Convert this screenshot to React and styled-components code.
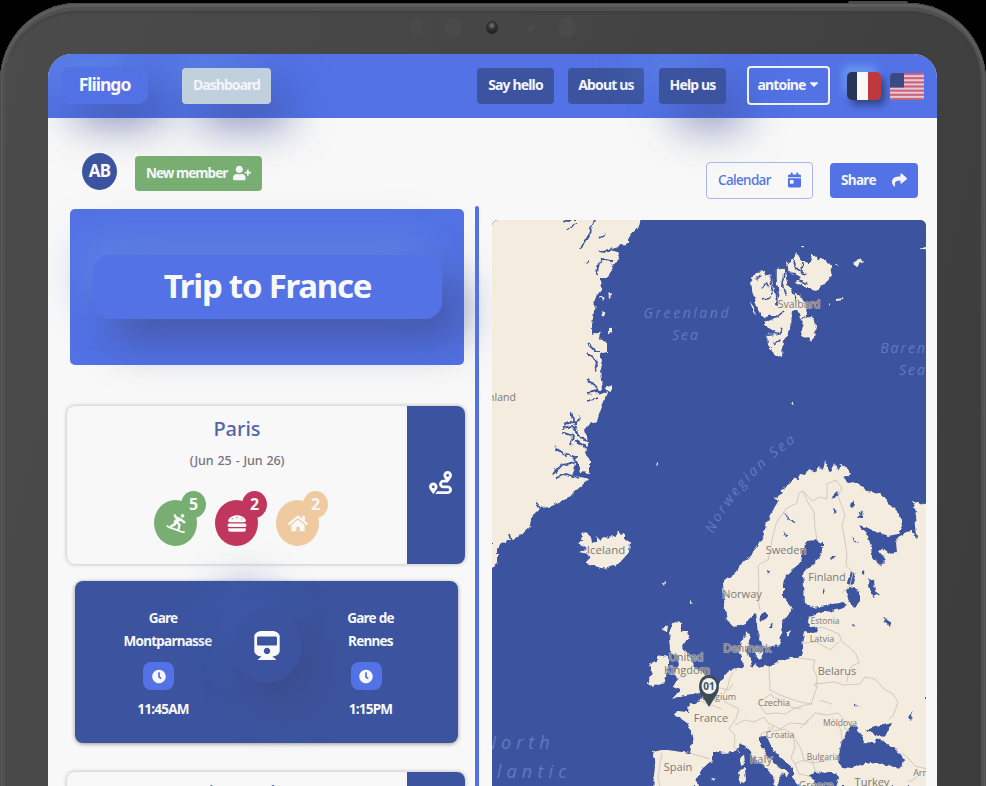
import React from "react";
import styled, { createGlobalStyle } from "styled-components";
import {
  FaUserPlus, FaCalendarDay, FaShare, FaRoute, FaSnowboarding,
  FaHamburger, FaHome, FaClock, FaTrain, FaCaretDown,
} from "react-icons/fa";

const c = {
  blue: "#5272e5", navy: "#3c549f", paper: "#f8f8f8",
  green: "#78ae71", red: "#c1365d", sand: "#efc9a0", land: "#f3ecdf",
};

const Global = createGlobalStyle`
  * { box-sizing: border-box; }
  html, body { margin: 0; background: #000; overflow: hidden; }
  body { font-family: "Noto Sans", "Open Sans", sans-serif; color: ${c.paper}; }
`;

const Device = styled.div`
  position: relative;
  width: 986px;
  height: 786px;
  overflow: hidden;
  background: #000;
`;
const PowerKey = styled.div`
  position: absolute;
  left: 848px;
  top: 1px;
  width: 60px;
  height: 4px;
  border-radius: 3px;
  background: #4b4b4b;
`;
const Bezel = styled.div`
  position: absolute;
  inset: 3px 0 -80px 0;
  padding: 51px 49px 0 48px;
  border-radius: 78px 78px 0 0;
  background: linear-gradient(105deg, #4b4b4b 0%, #454545 45%, #3c3c3c 100%);
  box-shadow: inset 0 0 0 1px #4b4b4b, inset 0 2px 1px 2px #5e5e5e, inset 0 0 0 5px #505050,
    inset 0 7px 0 1px #505050, inset 0 10px 3px -1px #3c3c3c;
`;
const Sensor = styled.i`
  position: absolute;
  left: ${p => p.$x}px;
  top: ${p => p.$y}px;
  width: ${p => p.$w}px;
  height: ${p => p.$h}px;
  border-radius: 50%;
  background: ${p => p.$lens ? "radial-gradient(circle at 48% 35%, #67676c 0 10%, #313136 35%, #1f1f23 75%)" : "#4a4a4a"};
`;
const Screen = styled.div`
  height: 760px;
  overflow: hidden;
  border-radius: 24px 24px 0 0;
  background: ${c.paper};
`;

const Header = styled.header`
  display: flex;
  align-items: center;
  height: 64px;
  padding: 0 13px;
  background: ${c.blue};
`;
const Logo = styled.div`
  width: 87px;
  height: 37px;
  margin-bottom: 1px;
  border-radius: 9px;
  background: ${c.blue};
  box-shadow: 15px 20px 40px rgba(60, 76, 150, .62), -12px -14px 36px rgba(112, 155, 245, .5);
  font: 700 17.5px/35px "Noto Sans", sans-serif;
  letter-spacing: -1px;
  text-align: center;
`;
const NavButton = styled.button`
  width: ${p => p.$w}px;
  height: 36px;
  margin: 0 0 1px ${p => p.$gap}px;
  padding: 0 0 2px;
  border: ${p => p.$outline ? "2px solid #eef0fa" : "0"};
  ${p => p.$outline && "height: 39px;"}
  border-radius: 4px;
  background: ${p => p.$pale ? "#c0d0dd" : p.$outline ? "transparent" : c.navy};
  box-shadow: ${p => p.$glow ? "18px 22px 42px rgba(60, 76, 150, .62), -18px -18px 40px rgba(112, 155, 235, .38)" : "none"};
  color: #f4f5fa;
  font: 700 14px "Noto Sans", sans-serif;
  letter-spacing: ${p => p.$pale ? -.95 : -.85}px;
  white-space: nowrap;
  svg { width: 12px; height: 14px; margin-left: 2px; vertical-align: -1px; }
`;
const FlagFr = styled.span`
  width: 34px;
  height: 28px;
  margin: 0 9px 0 17px;
  border-radius: 5px;
  background: linear-gradient(90deg, #273559 0 28%, #f8f8f8 28% 63%, #bd393c 63%);
  box-shadow: 4px 5px 7px rgba(35, 45, 90, .65), -4px -6px 9px rgba(115, 165, 250, .75);
`;
const FlagUs = styled.svg`
  width: 34px;
  height: 27px;
  border-radius: 3px;
`;

const Toolbar = styled.div`
  display: flex;
  height: 88px;
  padding: 35px 19px 0 34px;
`;
const Avatar = styled.div`
  width: 35px;
  height: 37px;
  border-radius: 50%;
  background: ${c.navy};
  font-weight: 700;
  font-size: 17px;
  line-height: 36px;
  letter-spacing: -.8px;
  text-align: center;
`;
const Action = styled.button`
  display: flex;
  align-items: center;
  justify-content: space-between;
  width: ${p => p.$w}px;
  height: ${p => p.$outline ? 37 : 35}px;
  margin: ${p => p.$m};
  padding: 0 11px 2px;
  border: ${p => p.$outline ? "1px solid #a8b7f0" : "0"};
  border-radius: 4px;
  background: ${p => p.$bg};
  color: ${p => p.$outline ? c.blue : "#f5f6fa"};
  font: ${p => p.$outline ? 500 : 700} 13.5px "Noto Sans", sans-serif;
  letter-spacing: ${p => p.$tight ? -.95 : -.65}px;
  white-space: nowrap;
  svg { flex: none; width: ${p => p.$icon}px; height: 16px; }
`;

const Columns = styled.main`
  display: grid;
  grid-template-columns: 427px 4px 434px;
  height: 600px;
`;
const Journey = styled.section`
  padding: 3px 0 0 19px;
`;
const Hero = styled.div`
  width: 394px;
  height: 156px;
  margin-left: 3px;
  padding: 46px 22px 0 23px;
  border-radius: 5px;
  background: ${c.blue};
`;
const Title = styled.h1`
  height: 64px;
  margin: 0;
  border-radius: 17px;
  background: ${c.blue};
  box-shadow: 20px 22px 42px rgba(63, 77, 145, .68), -10px -16px 42px rgba(112, 150, 232, .5);
  font-size: 33px;
  font-weight: 700;
  line-height: 62px;
  letter-spacing: -1.25px;
  text-align: center;
`;
const CityCard = styled.article`
  display: flex;
  justify-content: flex-end;
  width: 398px;
  height: 158px;
  margin-top: ${p => p.$top}px;
  overflow: hidden;
  border-radius: 8px;
  background: ${c.paper};
  box-shadow: 0 0 4px rgba(0, 0, 0, .28);
`;
const CityBody = styled.div`
  flex: 1;
  text-align: center;
`;
const CityName = styled.h2`
  margin: ${p => p.$lift ? 5 : 7}px 0 0;
  color: #5165aa;
  font-size: 20px;
  font-weight: 500;
  line-height: 32px;
`;
const Dates = styled.p`
  margin: 5px 0 0;
  color: #74747e;
  font-size: 12.5px;
  font-weight: 500;
  line-height: 22px;
  letter-spacing: -.15px;
  word-spacing: 1px;
`;
const Side = styled.div`
  display: flex;
  align-items: center;
  justify-content: center;
  width: 58px;
  padding: 0 0 6px 9px;
  background: ${c.navy};
  svg { width: 23px; height: 25px; }
`;
const Stats = styled.div`
  display: flex;
  gap: 18px;
  margin: 28px 0 0 87px;
`;
const Stat = styled.div`
  position: relative;
  display: flex;
  align-items: center;
  justify-content: center;
  width: 43px;
  height: 46px;
  border-radius: 50%;
  background: ${p => p.$bg};
  svg { width: 20px; height: 19px; }
`;
const Count = styled.b`
  position: absolute;
  left: 27px;
  top: -9px;
  width: 25px;
  height: 27px;
  border-radius: 50%;
  background: inherit;
  font-size: 16px;
  line-height: 27px;
`;
const Transport = styled.article`
  display: grid;
  grid-template-columns: 184px 16px 183px;
  width: 383px;
  height: 162px;
  margin: 17px 0 0 8px;
  border-radius: 8px;
  background: ${c.navy};
  box-shadow: 0 1px 4px rgba(0, 0, 0, .4);
`;
const Stop = styled.div`
  display: flex;
  flex-direction: column;
  align-items: center;
  padding-top: 26px;
  padding-left: ${p => p.$end ? 8 : 0}px;
  padding-right: ${p => p.$end ? 0 : 8}px;
  font-size: 13.5px;
  font-weight: 700;
  line-height: 23px;
  letter-spacing: -.75px;
  text-align: center;
`;
const StationLine = styled.span`
  padding-left: ${p => p.$inset || 0}px;
`;
const Clock = styled.span`
  display: grid;
  place-items: center;
  width: 31px;
  height: 28px;
  margin: 9px 9px 8px 0;
  border-radius: 8px;
  background: ${c.blue};
  svg { width: 14px; height: 15px; }
`;
const TrainDisc = styled.div`
  display: grid;
  place-items: center;
  justify-self: center;
  width: 70px;
  height: 75px;
  margin: 27px 0 0;
  border-radius: 50%;
  background: ${c.navy};
  box-shadow: 16px 22px 42px rgba(58, 72, 125, .6), -22px -26px 42px rgba(65, 97, 182, .42);
  svg { width: 26px; height: 29px; }
`;
const Divider = styled.div`
  border-radius: 2px;
  background: ${c.blue};
`;
const MapFrame = styled.section`
  height: 580px;
  margin: 14px 0 0 13px;
  overflow: hidden;
  width: 434px;
  border-radius: 6px 6px 0 0;
  background: ${c.navy};
`;
const MapSvg = styled.svg`
  display: block;
  font-family: "Open Sans", sans-serif;
`;

const stripes = [0, 2, 4, 6, 8, 10, 12];

function UsFlag() {
  return (
    <FlagUs viewBox="0 0 34 27" preserveAspectRatio="none">
      <rect width="34" height="27" fill="#e4c9d6" />
      {stripes.map(i => <rect key={i} y={i * 2.077} width="34" height="2.077" fill="#cc6179" />)}
      <rect width="14" height="14.5" fill="#394a84" />
    </FlagUs>
  );
}

const countries = [
  ["Iceland", 606, 554, 11.5], ["Svalbard", 799, 308, 10.5], ["Sweden", 786, 554, 11], ["Finland", 827, 581, 11],
  ["Norway", 742, 598, 11], ["Estonia", 825, 624, 8.5], ["Latvia", 822, 642, 9], ["Denmark", 747, 652, 11],
  ["United", 686, 661, 11], ["Kingdom", 687, 674, 11], ["Belarus", 837, 675, 11], ["Belgium", 719, 700, 9],
  ["Czechia", 774, 706, 9], ["France", 711, 722, 11], ["Moldova", 840, 726, 8.5], ["Croatia", 780, 738, 8.5],
  ["Italy", 761, 763, 11.5], ["Bulgaria", 823, 760, 8.5], ["Spain", 678, 771, 11], ["Turkey", 872, 786, 11],
  ["Greece", 816, 789, 10.5], ["Arm", 922, 776, 9],
];

const eurasia = `M725 610L724 598 723 583 733 575 739 566 747 559 757 548 763 537 766 525 771 513
  779 500 773 499 783 493 780 490 790 483 793 478 797 480 800 474 806 475 809 469 815 472 819 466 823 470 825 462
  829 471 832 472 835 463 837 471 840 464 848 468 851 474 843 478 848 483 854 482 862 487 868 491 882 495 890 505
  900 515 902 527 898 534 888 536 876 532 866 527 858 525 867 534 871 546 872 557 881 564 885 560 878 551
  882 548 889 554 896 553 895 543 905 532 911 531 917 538 916 525 915 516 917 510 912 501 927 505
  927 787 835 787 838 777 833 772 824 774 815 771 810 775 815 787 801 787 793 777 793 768 787 763
  773 750 767 737 760 736 760 745 768 757 777 765 788 773 787 778 782 773 780 780 778 787 775 787 773 777
  767 767 753 758 748 748 742 744 733 752 723 753 713 751 713 760 702 770 698 777 697 787 653 787
  655 767 653 752 660 749 690 753 693 737 687 722 675 715 677 711 688 712 689 703 697 705 702 698
  710 692 717 685 722 678 730 670 743 668 742 660 740 653 742 640 748 632 750 638 746 653 751 661 752 668
  755 664 760 667 765 665 770 667 777 663 790 658 797 658 802 652 803 638 806 631 812 633 817 632 818 626
  813 627 807 623 810 617 820 613 837 610 847 605 843 602 827 605 813 607 805 603 804 585 803 577 806 569
  815 563 823 551 823 543 816 540 807 541 805 545 800 562 787 575 783 583 783 597 792 607 790 613
  782 623 780 645 767 647 762 645 758 633 755 613 745 623 735 627 727 620Z`;

const greenland = `M491 219H641L639 226 632 235 628 238 628 243 621 245 612 250 620 253 617 262 611 265 612 271
  609 277 602 277 601 290 595 298 594 311 592 325 592 335 600 331 599 340 607 342 607 352 600 354 602 360
  600 370 602 389 598 395 607 392 603 404 600 412 597 421 591 424 586 428 588 445 586 452 590 462 590 473
  580 472 577 461 572 475 588 479 579 489 568 498 550 507 540 508 533 515 529 528 522 534 514 539 502 542
  497 549 497 562 491 570Z`;

const svalbard = `M751 279L756 272 766 271 765 277 770 274 773 285 776 296 775 305 778 306 777 284 775 271 779 266 785 271
  787 283 791 290 800 296 806 305 807 316 800 318 797 309 792 310 791 326 788 334 783 343 782 357 775 354
  768 345 767 335 776 332 765 326 765 321 777 315 771 315 764 318 757 309 756 298 752 292Z
  M787 263L794 258 796 251 801 260 810 262 811 253 818 259 826 259 832 267 831 275 825 284 816 291 807 288 796 283 802 277 789 273Z
  M801 318L812 317 817 325 816 332 811 342 808 336 801 337 804 326Z M853 264l8-6 3 4-8 4Z M920 249l8-3v5Z
  M836 299l8-1-1 2-7 1Z M828 303l3 2-2 1Z M750 300l4 8 3 8-5-7Z M800 245l3 0-1 3Z M835 264l3 0-1 2Z`;

const svalbardInlets = `M756 280l5-5M762 288l4-5 3 5M776 268v14l3 16M770 276l3 18M793 259l3 9 9 6M803 262l-1 9M811 252l-1 12
  M787 271l9 3M785 268l-3 16 4 12M765 321l13-5 6-5M766 336l13-3 3-5M774 345l6-6M793 291l4 12M796 279l10 5M771 297l-9 2`;

const iceland = `M577 543L583 541 581 535 585 531 591 536 592 543 596 542 597 536 601 540 604 536 607 539 611 535 616 537
  618 530 621 534 625 532 625 540 630 543 629 552 624 558 618 564 605 569 596 566 586 563 590 559 587 554 579 552 586 549Z`;

const britain = `M673 622L682 623 680 632 689 632 687 640 682 647 690 657 695 667 702 673 707 677 702 687 700 693 685 695
  672 699 680 690 673 687 678 678 673 673 679 667 678 657 670 650 669 637 672 627Z
  M657 655L668 657 668 667 665 682 653 687 647 683 652 673 648 665 657 662Z M662 630l5-6-1 8Z`;

const waters = `M850 728L854 725 860 732 864 742 873 743 877 738 885 742 897 750 904 760 902 767 893 768 880 763 870 762
  860 765 852 768 843 767 837 762 840 750 842 740Z M863 731L875 727 892 723 889 730 882 737 872 734Z
  M846 590l8-3 6 5 0 9-6 7-5-7Z M869 578l5 3 3 14-4 2-5-12Z M850 571l6 5-3 10-6-3Z
  M760 616l6-4 3 3-4 5-4 3Z M769 628l4-9-1 9Z M832 496l5-5 2 4-6 4Z M833 509l4 2-3 2Z
  M850 505l5-4-2 7Z M857 518l6-9-1 8-4 1Z M851 536l7 8-3-1Z M863 570l3 2-3 2Z M830 556l5 1-3 3Z
  M875 560l9 2-3 3Z M852 624l3 1-2 2Z M883 617l8 5-1 4-6-5Z M872 585l4 4-1 6Z M876 590l5 4-4 1Z
  M854 703l6 4-5-1Z M908 717l5-6-2 9Z M906 727l9 5Z M782 513l14 9-2 1Z M782 531l6 5-3 0Z M823 588l2 5-2 1Z M767 570l3 1-2 4Z`;

const fjords = `M594 219l-5 16-8 13M563 221l6 1M566 230l7-5 4-1M599 238l6-4M597 250l7 2 7-4 5 4M599 262l4-2 10 1M599 263l-3 13
  M585 263l5-2M588 344l7 7 5 0M587 353l11 9-3 10M605 355l1 14M587 380l8 5 5 8M587 393l11-2M588 401l9-3
  M570 413l5 9-12 2M562 428l11-2 7 11 8 5M575 425l5-8M562 432l11 4-3 10M575 440l12 8M555 447l8 7 12 3 3 11M553 474l9-9 13-3M556 478l10-4 13 4
  M536 502l4 6M509 534l2 6`;

const borders = `M760 610L758 599 759 586 758 566 761 563 768 560 770 552 772 540 776 524 780 517 787 508 797 503 799 493 803 491 807 501 814 512
  815 527 817 540M803 491L812 501 820 497 827 499 827 484 836 480 842 488
  838 496 845 515 842 525 844 535 847 555 846 565 853 573 850 585 842 593M817 627l8 1 14 6 3 8 8 6 6 6 3 9-7 3-4 9-1 7M803 643l13-1 15 8M830 650l9-8
  M798 658l17 2-2 8 4 9 0 10-3 8-3 10M769 667l1 23 10 5 8 3 12 4 12 2M817 688l-3-4 21-2 8 3 17-1 5-7 10 2 9 10 9 5 5 8-5 14-4 3M733 672l-3 6-3 11-4 6 2 7 14 7-3 10-7 10 6 6-1 12 6 6
  M758 703l13-9 2 3 14 5 4 5 10 2M758 703l8 11 10-1 9 1 10-6 15-4M735 725l10-5 9 2 10-5 4 6 12 6 10-6 16 1 2-5M773 731l12-2 8 6 8 14 3 11 7 3 20-3M800 728l8-7 7-8 12 2 11-2 5 5 2 11
  4 1M793 735l2 12-4 11 4 6 6-3 11-1 3 10 3 2M698 700l24 9M690 753l20 6M832 718l9 12 1 11M760 737l2-4 10-3 1-5M720 688l9 2 4-6
  M902 753l8 7 5 6 12 3M908 782l8-4 3-5M795 764l4 10 10 2M820 700l12 4M662 753l-4 24 2 10M770 731l-1-5`;

function TripMap() {
  return (
    <MapSvg width="434" height="566" viewBox="492 220 434 566">
      <defs>
        <filter id="coast" x="-5%" y="-5%" width="110%" height="110%">
          <feTurbulence type="fractalNoise" baseFrequency=".17" numOctaves="2" seed="4" />
          <feDisplacementMap in="SourceGraphic" scale="5.5" xChannelSelector="R" yChannelSelector="G" />
        </filter>
      </defs>
      <rect x="492" y="220" width="434" height="566" fill={c.navy} />
      <g filter="url(#coast)" fill={c.land}>
        <path d={greenland} />
        <path d={svalbard} />
        <path d={iceland} />
        <path d={eurasia} />
        <path d={britain} />
        <path d="M740 758l4-3 1 9-4 2Z M738 771l7-3 1 12-6 3Z M755 654l7-3 1 8-5 1Z M787 633l4-4-1 5-3 4Z M711 778l5-1-2 4Z M600 296l4 2-2 4Z M602 311l4 2-3 4Z M609 294l3-1-1 5Z M608 328l4-2 0 7-4 1Z M655 463l4-2-3 5Z M791 402l3 0 0 3Z M605 388l7-4 0 8-7-1Z M690 601l3 3-3 1Z M662 583l3-1-1 4Z" />
        <path d={waters} fill={c.navy} />
        <path d={fjords} fill="none" stroke={c.navy} strokeWidth="1.8" />
        <path d={svalbardInlets} fill="none" stroke={c.navy} strokeWidth="1.6" />
        <path d="M862 728l9 4-2 7-7-5Z" />
      </g>
      <path d={borders} fill="none" stroke="#cdc5bb" strokeWidth=".9" strokeLinejoin="round" />
      <g fill="#6279bd" fontSize="14" fontStyle="italic" textAnchor="middle" letterSpacing="2">
        <text x="687" y="318" textLength="87">Greenland</text>
        <text x="686" y="340">Sea</text>
        <text x="911" y="353">Barents</text>
        <text x="913" y="375">Sea</text>
        <path id="norwegian" d="M713 534Q740 478 804 436" fill="none" />
        <text textAnchor="start" letterSpacing="2.7"><textPath href="#norwegian">Norwegian Sea</textPath></text>
        <text x="519" y="749" fontSize="18" letterSpacing="5">North</text>
        <text x="521" y="778" fontSize="18" letterSpacing="5.2">Atlantic</text>
      </g>
      <g fill="#7f7973" stroke={c.land} strokeOpacity=".55" strokeWidth="1.6" paintOrder="stroke" textAnchor="middle">
        {countries.map(([name, x, y, size]) => (
          <text key={name} x={x} y={y} fontSize={size}>{name}</text>
        ))}
        <text x="502" y="401" fontSize="10.5">nland</text>
      </g>
      <path d="M709 707L701 694C697 687 699 675 709 675C719 675 721 687 717 694Z" fill="#3e4b55" />
      <ellipse cx="709" cy="686" rx="7.4" ry="8" fill="#f0f1f3" />
      <text x="709" y="690" fontSize="10" fontWeight="700" textAnchor="middle" fill="#47515b">01</text>
    </MapSvg>
  );
}

export default function App() {
  return (
    <>
      <Global />
      <Device>
        <PowerKey />
        <Bezel>
          <Sensor $x={410} $y={16} $w={13} $h={17} />
          <Sensor $x={444} $y={14} $w={18} $h={21} />
          <Sensor $lens $x={486} $y={18} $w={12} $h={13} />
          <Sensor $x={528} $y={22} $w={6} $h={7} />
          <Sensor $x={558} $y={14} $w={18} $h={21} />
          <Screen>
            <Header>
              <Logo>Fliingo</Logo>
              <NavButton $w={89} $gap={34} $pale $glow>Dashboard</NavButton>
              <NavButton $w={77} $gap={206}>Say hello</NavButton>
              <NavButton $w={76} $gap={14}>About us</NavButton>
              <NavButton $w={67} $gap={15} $glow>Help us</NavButton>
              <NavButton $w={83} $gap={21} $outline>antoine<FaCaretDown /></NavButton>
              <FlagFr />
              <UsFlag />
            </Header>
            <Toolbar>
              <Avatar>AB</Avatar>
              <Action $w={127} $m="3px 0 0 18px" $bg={c.green} $icon={18} $tight>New member <FaUserPlus /></Action>
              <Action $w={107} $m="9px 0 0 auto" $bg="transparent" $outline $icon={13}>Calendar <FaCalendarDay /></Action>
              <Action $w={88} $m="10px 0 0 17px" $bg={c.blue} $icon={15}>Share <FaShare /></Action>
            </Toolbar>
            <Columns>
              <Journey>
                <Hero><Title>Trip to France</Title></Hero>
                <CityCard $top={41}>
                  <CityBody>
                    <CityName>Paris</CityName>
                    <Dates>(Jun 25 - Jun 26)</Dates>
                    <Stats>
                      <Stat $bg={c.green}><FaSnowboarding /><Count>5</Count></Stat>
                      <Stat $bg={c.red}><FaHamburger /><Count>2</Count></Stat>
                      <Stat $bg={c.sand}><FaHome /><Count>2</Count></Stat>
                    </Stats>
                  </CityBody>
                  <Side><FaRoute /></Side>
                </CityCard>
                <Transport>
                  <Stop>
                    <StationLine>Gare</StationLine>
                    <StationLine $inset={9}>Montparnasse</StationLine>
                    <Clock><FaClock /></Clock>11:45AM
                  </Stop>
                  <TrainDisc><FaTrain /></TrainDisc>
                  <Stop $end>
                    <StationLine>Gare de</StationLine>
                    <StationLine>Rennes</StationLine>
                    <Clock><FaClock /></Clock>1:15PM
                  </Stop>
                </Transport>
                <CityCard $top={29}>
                  <CityBody><CityName $lift>Saint-Malo</CityName></CityBody>
                  <Side />
                </CityCard>
              </Journey>
              <Divider />
              <MapFrame><TripMap /></MapFrame>
            </Columns>
          </Screen>
        </Bezel>
      </Device>
    </>
  );
}
